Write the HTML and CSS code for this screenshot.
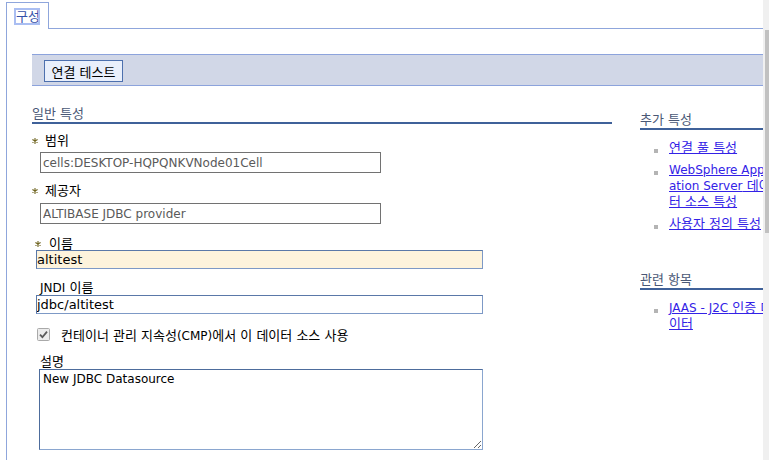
FILE: index.html
```html
<!DOCTYPE html>
<html lang="ko">
<head>
<meta charset="utf-8">
<title>구성</title>
<link rel="stylesheet" href="styles.css">
</head>
<body>
<div class="screen">
  <div class="frame">
    <div class="tabbar">
      <div class="tab"><a class="tablabel ko" href="#">구성</a></div>
      <div class="tabfill"></div>
    </div>
    <div class="panel">
      <div class="toolbar"><button class="btn ko" type="button">연결 테스트</button></div>
      <div class="columns">
        <div class="main">
          <h2 class="sect ko">일반 특성</h2>
          <div class="field f1">
            <div class="label ko"><svg class="req" width="6" height="6" viewBox="0 0 6 6"><path d="M3 0V6M0.4 1.5L5.6 4.5M0.4 4.5L5.6 1.5" stroke="#6f6420" stroke-width="1.1"/></svg>범위</div>
            <input class="txt ro short" type="text" value="cells:DESKTOP-HQPQNKVNode01Cell" readonly>
          </div>
          <div class="field f2">
            <div class="label ko"><svg class="req" width="6" height="6" viewBox="0 0 6 6"><path d="M3 0V6M0.4 1.5L5.6 4.5M0.4 4.5L5.6 1.5" stroke="#6f6420" stroke-width="1.1"/></svg>제공자</div>
            <input class="txt ro short" type="text" value="ALTIBASE JDBC provider" readonly>
          </div>
          <div class="field f3">
            <div class="label small ko"><svg class="req" width="6" height="6" viewBox="0 0 6 6"><path d="M3 0V6M0.4 1.5L5.6 4.5M0.4 4.5L5.6 1.5" stroke="#6f6420" stroke-width="1.1"/></svg>이름</div>
            <input class="txt edit focus" type="text" value="altitest">
          </div>
          <div class="field f4">
            <div class="label small ko"><span class="lat">JNDI</span>&nbsp;이름</div>
            <input class="txt edit" type="text" value="jdbc/altitest">
          </div>
          <div class="check">
            <svg class="cb" width="13" height="13" viewBox="0 0 13 13"><rect x="0.5" y="0.5" width="12" height="12" rx="1" fill="#ececec" stroke="#a9a9a9"/><path d="M3 6.6L5.4 9.2L10 3.6" fill="none" stroke="#5a5a5a" stroke-width="1.8"/></svg>
            <span class="ko">컨테이너 관리 지속성<span class="lat">(CMP)</span>에서 이 데이터 소스 사용</span>
          </div>
          <div class="field f5">
            <div class="label small ko">설명</div>
            <textarea class="area">New JDBC Datasource</textarea>
          </div>
        </div>
        <div class="side">
          <h2 class="sect sect-side ko">추가 특성</h2>
          <ul class="links">
            <li><a class="link ko" href="#">연결 풀 특성</a></li>
            <li><a class="link ko" href="#"><span class="lat">WebSphere Applic<br>ation Server</span> 데이<br>터 소스 특성</a></li>
            <li><a class="link ko" href="#">사용자 정의 특성</a></li>
          </ul>
          <h2 class="sect sect-side2 ko">관련 항목</h2>
          <ul class="links">
            <li><a class="link ko" href="#"><span class="lat">JAAS - J2C</span> 인증 데<br>이터</a></li>
          </ul>
        </div>
      </div>
    </div>
  </div>
  <div class="scrollbar"><div class="thumb"></div></div>
</div>
</body>
</html>
```
FILE: styles.css
```css
html, body {
  margin: 0;
  padding: 0;
  background: #fff;
}
body {
  font-family: "DejaVu Sans", "Noto Sans CJK KR", sans-serif;
  font-size: 12px;
  color: #000;
}
.ko {
  font-size: 13px;
}
.lat {
  font-size: 12px;
}
.screen {
  display: flex;
  width: 769px;
  height: 460px;
  overflow: hidden;
}
.frame {
  flex: none;
  width: 763px;
  height: 460px;
  overflow: hidden;
  display: flex;
  flex-direction: column;
}
.scrollbar {
  flex: none;
  width: 6px;
  height: 460px;
  background: #f0f0f0;
  padding: 30px 0 0 2px;
  box-sizing: border-box;
}
.thumb {
  height: 203px;
  background: #c1c1c1;
}

/* tabs */
.tabbar {
  flex: none;
  display: flex;
  height: 27px;
  padding: 2px 0 0 6px;
}
.tab {
  width: 41px;
  border: 1px solid #8fa6dc;
  border-bottom: 0;
}
.tablabel {
  display: block;
  width: 22px;
  margin: 7px 0 0 9px;
  line-height: 13px;
  height: 13px;
  outline: 2px solid #aabef2;
  color: #3450a8;
  text-decoration: none;
  white-space: nowrap;
}
.tabfill {
  flex: 1;
  border-bottom: 1px solid #8fa6dc;
}

/* panel */
.panel {
  flex: 1;
  margin-left: 6px;
  border-left: 1px solid #8fa6dc;
  padding: 25px 0 0 25px;
}
.toolbar {
  display: flex;
  border-top: 1px solid #8ca3dc;
  border-bottom: 1px solid #8ca3dc;
  background: #d1d7e7;
  padding: 5px 0 3px 12px;
}
.btn {
  width: 79px;
  height: 22px;
  padding: 0;
  border: 1px solid #4d70ae;
  background: #e9effb;
  font-family: inherit;
  color: #000;
}
.columns {
  display: flex;
  gap: 28px;
}
.main {
  flex: none;
  width: 580px;
}
.side {
  flex: none;
  width: 150px;
}
.sect {
  margin: 20px 0 0;
  font-weight: normal;
  line-height: 16px;
  color: #4a5876;
  border-bottom: 2px solid #3f6199;
}
.sect-side {
  margin-top: 26px;
}
.sect-side2 {
  margin-top: 40px;
}

/* fields */
.field {
  display: flex;
  flex-direction: column;
  align-items: flex-start;
}
.label {
  display: flex;
  align-items: center;
  line-height: 16px;
  height: 16px;
  white-space: nowrap;
}
.label.small {
  line-height: 12px;
  height: 12px;
}
.req {
  flex: none;
  margin-right: 7px;
}
.txt {
  box-sizing: border-box;
  margin: 0;
  font-family: inherit;
  outline: none;
}
.ro {
  height: 21px;
  border: 1px solid #727272;
  padding: 0 2px;
  color: #5a5a5a;
  font-size: 12px;
  background: #fff;
}
.short {
  width: 341px;
  margin-left: 8px;
}
.edit {
  width: 447px;
  height: 19px;
  margin-left: 4px;
  border: 1px solid #7d99c6;
  border-top-color: #5a78a8;
  border-left-color: #5a78a8;
  padding: 0;
  font-size: 13px;
  color: #000;
  background: #fff;
}
.focus {
  background: #fdf3dc;
}
.f1 .label { margin-top: 9px; }
.f1 .txt { margin-top: 3px; }
.f2 .label { margin-top: 10px; }
.f2 .txt { margin-top: 4px; }
.f3 .label { margin-top: 14px; padding-left: 3px; }
.f3 .req { margin-right: 8px; }
.f3 .txt { margin-top: 0; }
.f4 .label { margin-top: 13px; padding-left: 8px; }
.f4 .txt { margin-top: 1px; }
.check {
  display: flex;
  align-items: center;
  height: 16px;
  margin: 12px 0 0 5px;
  white-space: nowrap;
}
.cb {
  flex: none;
  margin-right: 11px;
}
.f5 .label { margin-top: 14px; padding-left: 8px; }
.area {
  display: block;
  box-sizing: border-box;
  width: 444px;
  height: 81px;
  margin: 1px 0 0 7px;
  padding: 2px 3px;
  border: 1px solid #8aa6cf;
  border-top-color: #4d6c9c;
  border-left-color: #4d6c9c;
  font-family: inherit;
  font-size: 12px;
  line-height: 15px;
  color: #000;
  background: #fff;
  outline: none;
}

/* side links */
.links {
  list-style: none;
  margin: 10px 0 0;
  padding: 0;
}
.links li {
  display: flex;
  line-height: 16px;
  margin-top: 6px;
}
.links li:first-child {
  margin-top: 0;
}
.links li::before {
  content: "";
  flex: none;
  width: 4px;
  height: 4px;
  background: #b4b4b4;
  margin: 9px 11px 0 14px;
}
.link {
  color: #3322e6;
  text-decoration: underline;
  white-space: nowrap;
}
```
